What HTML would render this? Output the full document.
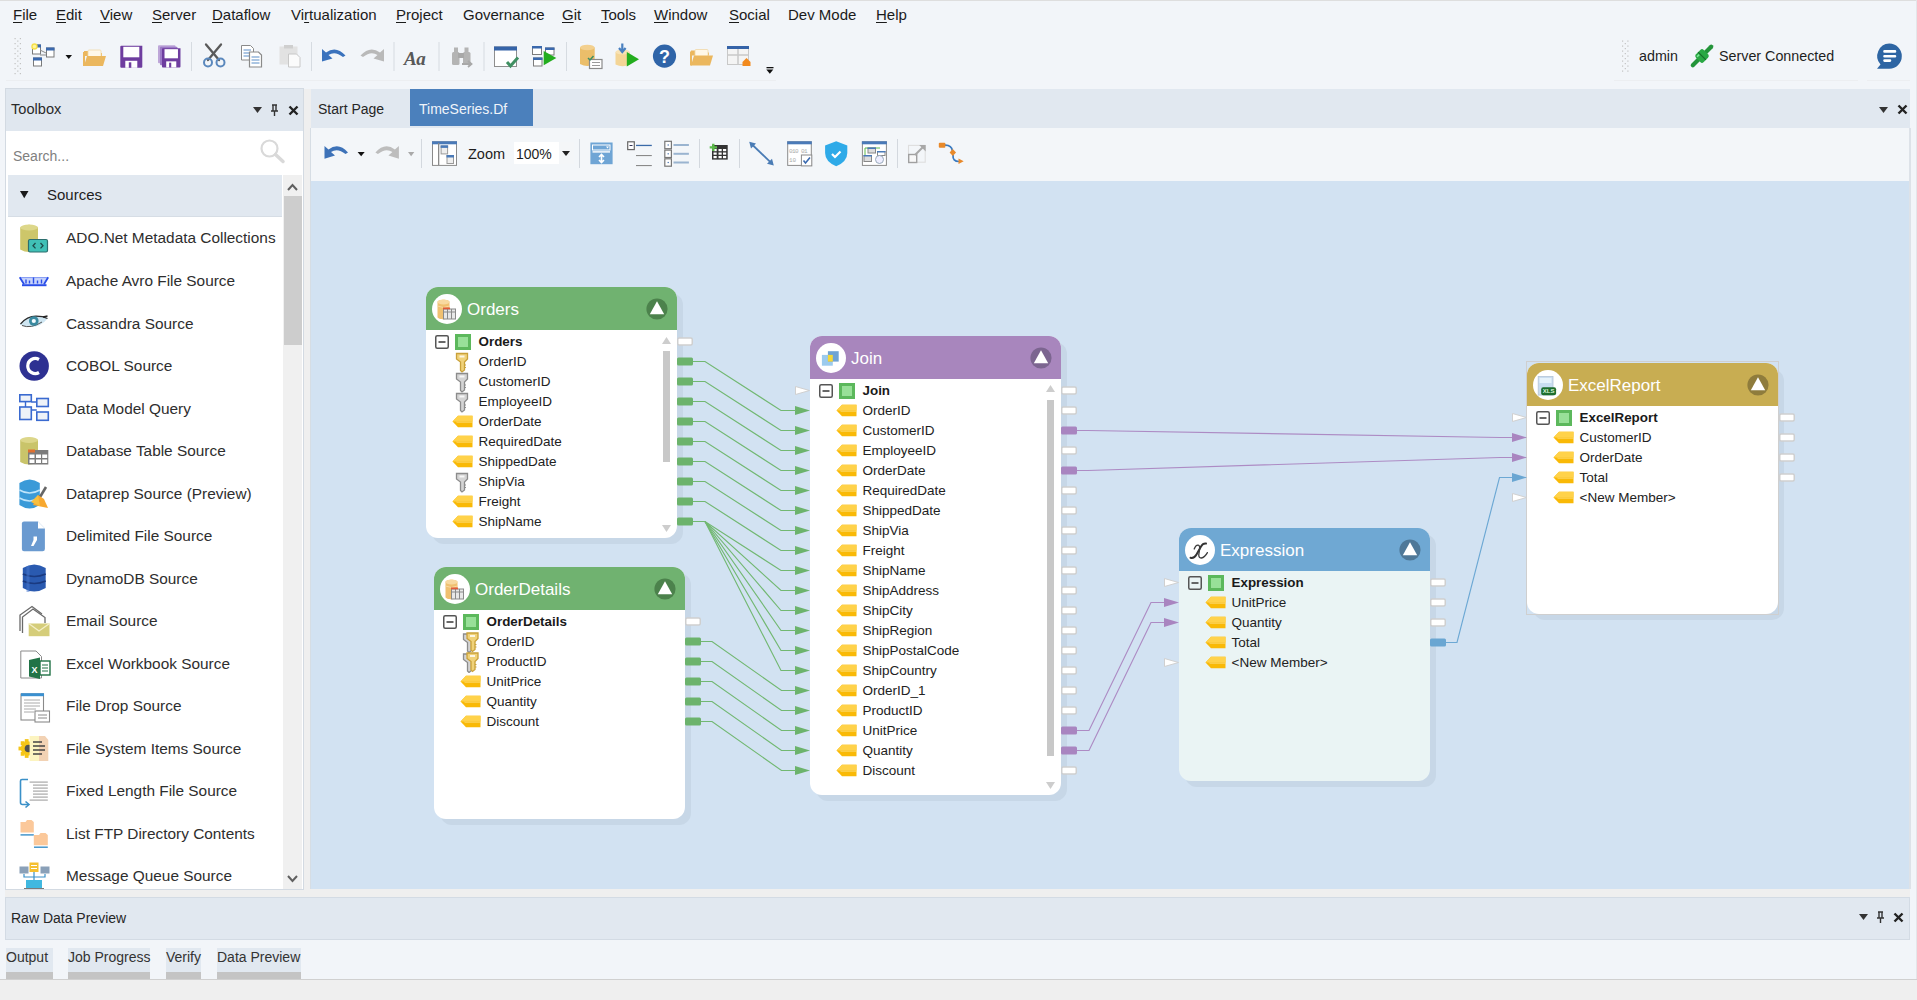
<!DOCTYPE html><html><head><meta charset="utf-8"><style>
*{margin:0;padding:0;box-sizing:border-box}
html,body{width:1917px;height:1000px;overflow:hidden;background:#f2f5f9;font-family:"Liberation Sans",sans-serif}
.t{position:absolute;white-space:pre}
.r{position:absolute}
u{text-decoration:none;border-bottom:1px solid currentColor}
</style></head><body><div class="r" style="left:0px;top:0px;width:1917px;height:1px;background:#dedede;"></div><div class="t" style="left:13px;top:7.30px;font-size:15px;line-height:15px;color:#1b1b1b;font-weight:400;"><span style="text-decoration:underline;text-underline-offset:2px">F</span>ile</div><div class="t" style="left:56px;top:7.30px;font-size:15px;line-height:15px;color:#1b1b1b;font-weight:400;"><span style="text-decoration:underline;text-underline-offset:2px">E</span>dit</div><div class="t" style="left:100px;top:7.30px;font-size:15px;line-height:15px;color:#1b1b1b;font-weight:400;"><span style="text-decoration:underline;text-underline-offset:2px">V</span>iew</div><div class="t" style="left:152px;top:7.30px;font-size:15px;line-height:15px;color:#1b1b1b;font-weight:400;"><span style="text-decoration:underline;text-underline-offset:2px">S</span>erver</div><div class="t" style="left:212px;top:7.30px;font-size:15px;line-height:15px;color:#1b1b1b;font-weight:400;"><span style="text-decoration:underline;text-underline-offset:2px">D</span>ataflow</div><div class="t" style="left:291px;top:7.30px;font-size:15px;line-height:15px;color:#1b1b1b;font-weight:400;">Vi<span style="text-decoration:underline;text-underline-offset:2px">r</span>tualization</div><div class="t" style="left:396px;top:7.30px;font-size:15px;line-height:15px;color:#1b1b1b;font-weight:400;"><span style="text-decoration:underline;text-underline-offset:2px">P</span>roject</div><div class="t" style="left:463px;top:7.30px;font-size:15px;line-height:15px;color:#1b1b1b;font-weight:400;">Governance</div><div class="t" style="left:562px;top:7.30px;font-size:15px;line-height:15px;color:#1b1b1b;font-weight:400;"><span style="text-decoration:underline;text-underline-offset:2px">G</span>it</div><div class="t" style="left:601px;top:7.30px;font-size:15px;line-height:15px;color:#1b1b1b;font-weight:400;"><span style="text-decoration:underline;text-underline-offset:2px">T</span>ools</div><div class="t" style="left:654px;top:7.30px;font-size:15px;line-height:15px;color:#1b1b1b;font-weight:400;"><span style="text-decoration:underline;text-underline-offset:2px">W</span>indow</div><div class="t" style="left:729px;top:7.30px;font-size:15px;line-height:15px;color:#1b1b1b;font-weight:400;"><span style="text-decoration:underline;text-underline-offset:2px">S</span>ocial</div><div class="t" style="left:788px;top:7.30px;font-size:15px;line-height:15px;color:#1b1b1b;font-weight:400;">Dev Mode</div><div class="t" style="left:876px;top:7.30px;font-size:15px;line-height:15px;color:#1b1b1b;font-weight:400;"><span style="text-decoration:underline;text-underline-offset:2px">H</span>elp</div><div class="r" style="left:6px;top:80px;width:770px;height:1px;background:#eceef1;"></div><div class="r" style="left:1614px;top:80px;width:244px;height:1px;background:#eceef1;"></div><div class="r" style="left:1867px;top:80px;width:43px;height:1px;background:#eceef1;"></div><div class="r" style="left:1916px;top:0px;width:1px;height:980px;background:#e4e6e9;"></div><div class="r" style="left:5px;top:89px;width:1905px;height:808px;background:#efefef;"></div><div class="r" style="left:5px;top:88px;width:299px;height:802px;background:#d3dae2;"></div><div class="r" style="left:6px;top:89px;width:297px;height:42px;background:#e0e7ef;"></div><div class="t" style="left:11px;top:102.44px;font-size:14.6px;line-height:14.6px;color:#2a2a2a;font-weight:400;">Toolbox</div><div class="r" style="left:6px;top:131px;width:297px;height:44px;background:#ffffff;"></div><div class="t" style="left:13px;top:149.15px;font-size:14px;line-height:14px;color:#808080;font-weight:400;">Search...</div><svg class="r" style="left:253px;top:107px;" width="9" height="6" viewBox="0 0 9 6"><path d="M0 0H9L4.5 6Z" fill="#333"/></svg><svg class="r" style="left:270px;top:104px;" width="9" height="12" viewBox="0 0 9 12"><path d="M2 1H7M3 1V7M6 1V7M1 7H8M4.5 7V12" stroke="#333" stroke-width="1.4" fill="none"/></svg><svg class="r" style="left:287.5px;top:104.5px;" width="11" height="11" viewBox="0 0 11 11"><path d="M1.5 1.5L9.5 9.5M9.5 1.5L1.5 9.5" stroke="#222" stroke-width="2.4"/></svg><svg class="r" style="left:259px;top:139px;" width="28" height="25" viewBox="0 0 28 25"><circle cx="10.5" cy="9.5" r="8" fill="none" stroke="#d9d9d9" stroke-width="2.2"/><path d="M16.5 15.5L24 22.5" stroke="#d9d9d9" stroke-width="3.5" stroke-linecap="round"/></svg><div class="r" style="left:6px;top:175px;width:297px;height:714px;background:#ffffff;"></div><div class="r" style="left:8px;top:175px;width:274px;height:42px;background:#e1e8f0;"></div><div class="r" style="left:8px;top:216px;width:274px;height:1px;background:#d6dde5;"></div><div class="t" style="left:47px;top:187.30px;font-size:15px;line-height:15px;color:#1e1e1e;font-weight:400;">Sources</div><svg class="r" style="left:19.5px;top:190.5px;" width="9" height="8" viewBox="0 0 9 8"><path d="M0 0H8.5L4.25 7.2Z" fill="#1a1a1a"/></svg><div class="r" style="left:283px;top:175px;width:19px;height:714px;background:#f0f0f0;"></div><div class="r" style="left:284px;top:196px;width:18px;height:149px;background:#cdcdcd;"></div><svg class="r" style="left:287px;top:183px;" width="11" height="8" viewBox="0 0 11 8"><path d="M1 7L5.5 2L10 7" stroke="#606060" stroke-width="2" fill="none"/></svg><svg class="r" style="left:287px;top:875px;" width="11" height="8" viewBox="0 0 11 8"><path d="M1 1L5.5 6L10 1" stroke="#606060" stroke-width="2" fill="none"/></svg><div class="t" style="left:66px;top:230.46px;font-size:15.4px;line-height:15.4px;color:#2e2e2e;font-weight:400;">ADO.Net Metadata Collections</div><div class="t" style="left:66px;top:272.99px;font-size:15.4px;line-height:15.4px;color:#2e2e2e;font-weight:400;">Apache Avro File Source</div><div class="t" style="left:66px;top:315.52px;font-size:15.4px;line-height:15.4px;color:#2e2e2e;font-weight:400;">Cassandra Source</div><div class="t" style="left:66px;top:358.05px;font-size:15.4px;line-height:15.4px;color:#2e2e2e;font-weight:400;">COBOL Source</div><div class="t" style="left:66px;top:400.58px;font-size:15.4px;line-height:15.4px;color:#2e2e2e;font-weight:400;">Data Model Query</div><div class="t" style="left:66px;top:443.11px;font-size:15.4px;line-height:15.4px;color:#2e2e2e;font-weight:400;">Database Table Source</div><div class="t" style="left:66px;top:485.64px;font-size:15.4px;line-height:15.4px;color:#2e2e2e;font-weight:400;">Dataprep Source (Preview)</div><div class="t" style="left:66px;top:528.17px;font-size:15.4px;line-height:15.4px;color:#2e2e2e;font-weight:400;">Delimited File Source</div><div class="t" style="left:66px;top:570.70px;font-size:15.4px;line-height:15.4px;color:#2e2e2e;font-weight:400;">DynamoDB Source</div><div class="t" style="left:66px;top:613.23px;font-size:15.4px;line-height:15.4px;color:#2e2e2e;font-weight:400;">Email Source</div><div class="t" style="left:66px;top:655.76px;font-size:15.4px;line-height:15.4px;color:#2e2e2e;font-weight:400;">Excel Workbook Source</div><div class="t" style="left:66px;top:698.29px;font-size:15.4px;line-height:15.4px;color:#2e2e2e;font-weight:400;">File Drop Source</div><div class="t" style="left:66px;top:740.82px;font-size:15.4px;line-height:15.4px;color:#2e2e2e;font-weight:400;">File System Items Source</div><div class="t" style="left:66px;top:783.35px;font-size:15.4px;line-height:15.4px;color:#2e2e2e;font-weight:400;">Fixed Length File Source</div><div class="t" style="left:66px;top:825.88px;font-size:15.4px;line-height:15.4px;color:#2e2e2e;font-weight:400;">List FTP Directory Contents</div><div class="t" style="left:66px;top:868.41px;font-size:15.4px;line-height:15.4px;color:#2e2e2e;font-weight:400;">Message Queue Source</div><div class="r" style="left:310px;top:128px;width:1px;height:761px;background:#d6dde4;"></div><div class="r" style="left:311px;top:89px;width:1599px;height:39px;background:#e1e8f0;"></div><div class="t" style="left:318px;top:101.65px;font-size:14px;line-height:14px;color:#262626;font-weight:400;">Start Page</div><div class="r" style="left:410px;top:89px;width:123px;height:37px;background:#4b80bc;"></div><div class="t" style="left:419px;top:101.65px;font-size:14px;line-height:14px;color:#f0f4fa;font-weight:400;">TimeSeries.Df</div><svg class="r" style="left:1879px;top:107px;" width="9" height="6" viewBox="0 0 9 6"><path d="M0 0H9L4.5 6Z" fill="#333"/></svg><svg class="r" style="left:1897px;top:104px;" width="11" height="11" viewBox="0 0 11 11"><path d="M1.5 1.5L9.5 9.5M9.5 1.5L1.5 9.5" stroke="#222" stroke-width="2.4"/></svg><div class="r" style="left:311px;top:128px;width:1599px;height:53px;background:#f3f6f9;"></div><div class="r" style="left:311px;top:181px;width:1599px;height:708px;background:#d2e2f2;"></div><div class="r" style="left:1909px;top:128px;width:2px;height:761px;background:#dde2e8;"></div><div class="t" style="left:468px;top:146.73px;font-size:14.5px;line-height:14.5px;color:#1e1e1e;font-weight:400;">Zoom</div><div class="r" style="left:514px;top:142px;width:60px;height:22px;background:#ffffff;"></div><div class="r" style="left:559px;top:142px;width:15px;height:22px;background:#f4f6f8;"></div><div class="t" style="left:516px;top:147.15px;font-size:14px;line-height:14px;color:#1e1e1e;font-weight:400;">100%</div><svg class="r" style="left:562px;top:151px;" width="8" height="5" viewBox="0 0 8 5"><path d="M0 0H8L4 5Z" fill="#222"/></svg><div class="r" style="left:421px;top:139px;width:1px;height:29px;background:#d3d8de;"></div><div class="r" style="left:579px;top:139px;width:1px;height:29px;background:#d3d8de;"></div><div class="r" style="left:699px;top:139px;width:1px;height:29px;background:#d3d8de;"></div><div class="r" style="left:739px;top:139px;width:1px;height:29px;background:#d3d8de;"></div><div class="r" style="left:897px;top:139px;width:1px;height:29px;background:#d3d8de;"></div><div class="r" style="left:5px;top:897px;width:1905px;height:43px;background:#d3dbe4;"></div><div class="r" style="left:6px;top:898px;width:1903px;height:41px;background:#e1e8f0;"></div><div class="t" style="left:11px;top:910.65px;font-size:14px;line-height:14px;color:#262626;font-weight:400;">Raw Data Preview</div><svg class="r" style="left:1859px;top:914px;" width="9" height="6" viewBox="0 0 9 6"><path d="M0 0H9L4.5 6Z" fill="#333"/></svg><svg class="r" style="left:1876px;top:911px;" width="9" height="12" viewBox="0 0 9 12"><path d="M2 1H7M3 1V7M6 1V7M1 7H8M4.5 7V12" stroke="#333" stroke-width="1.4" fill="none"/></svg><svg class="r" style="left:1893px;top:912px;" width="11" height="11" viewBox="0 0 11 11"><path d="M1.5 1.5L9.5 9.5M9.5 1.5L1.5 9.5" stroke="#222" stroke-width="2.4"/></svg><div class="r" style="left:6px;top:948px;width:47px;height:24px;background:#e1e8f0;"></div><div class="r" style="left:6px;top:972px;width:47px;height:7px;background:#c4c4c4;"></div><div class="t" style="left:6px;top:950.15px;font-size:14px;line-height:14px;color:#333333;font-weight:400;">Output</div><div class="r" style="left:68px;top:948px;width:82px;height:24px;background:#e1e8f0;"></div><div class="r" style="left:68px;top:972px;width:82px;height:7px;background:#c4c4c4;"></div><div class="t" style="left:68px;top:950.15px;font-size:14px;line-height:14px;color:#333333;font-weight:400;">Job Progress</div><div class="r" style="left:166px;top:948px;width:35px;height:24px;background:#e1e8f0;"></div><div class="r" style="left:166px;top:972px;width:35px;height:7px;background:#c4c4c4;"></div><div class="t" style="left:166px;top:950.15px;font-size:14px;line-height:14px;color:#333333;font-weight:400;">Verify</div><div class="r" style="left:217px;top:948px;width:84px;height:24px;background:#e1e8f0;"></div><div class="r" style="left:217px;top:972px;width:84px;height:7px;background:#c4c4c4;"></div><div class="t" style="left:217px;top:950.15px;font-size:14px;line-height:14px;color:#333333;font-weight:400;">Data Preview</div><div class="r" style="left:0px;top:979px;width:1917px;height:1px;background:#d0d0d0;"></div><div class="r" style="left:0px;top:980px;width:1917px;height:20px;background:#efefef;"></div><div class="t" style="left:1639px;top:49.40px;font-size:14.3px;line-height:14.3px;color:#1e1e1e;font-weight:400;">admin</div><div class="t" style="left:1719px;top:49.40px;font-size:14.3px;line-height:14.3px;color:#1e1e1e;font-weight:400;">Server Connected</div><div class="r" style="left:432px;top:293px;width:251px;height:251px;border-radius:12px;background:#c7d7e7"></div><div class="r" style="left:426px;top:287px;width:251px;height:251px;border-radius:12px;background:#ffffff;overflow:hidden"><div class="r" style="left:0;top:0;width:251px;height:43px;background:#70b270"></div></div><svg class="r" style="left:432px;top:293.8px" width="30" height="30" viewBox="0 0 30 30"><circle cx="15" cy="15" r="15" fill="#fff"/><path d="M5.5 8C5.5 5 17.5 5 17.5 8V23C17.5 26 5.5 26 5.5 23Z" fill="#f0c070"/><ellipse cx="11.5" cy="8" rx="6" ry="2.6" fill="#f8d9a0"/><path d="M5.5 12Q11.5 15 17.5 12" stroke="#f8d9a0" stroke-width="1" fill="none"/><rect x="11.5" y="15" width="12" height="10" fill="#e8e8e8" stroke="#8a8a8a" stroke-width="1"/><path d="M11.5 18H23.5M15.5 15V25M19.5 15V25" stroke="#8a8a8a" stroke-width="1"/><rect x="11" y="13.5" width="7" height="1.8" fill="#e05a3a"/></svg><div class="t" style="left:467px;top:300.61px;font-size:17px;line-height:17px;color:#fff">Orders</div><svg class="r" style="left:645.8px;top:297.8px" width="22" height="22" viewBox="0 0 22 22"><circle cx="11" cy="11" r="10.6" fill="#4c824c"/><path d="M3.8 16.2L11 3.2L18.2 16.2Z" fill="#fff"/></svg><svg class="r" style="left:435px;top:335.0px" width="14" height="14" viewBox="0 0 14 14"><rect x="0.75" y="0.75" width="12.5" height="12.5" rx="1.5" fill="none" stroke="#555" stroke-width="1.5"/><rect x="3.5" y="6.2" width="7" height="1.6" fill="#444"/></svg><svg class="r" style="left:455px;top:333.5px" width="16" height="16" viewBox="0 0 16 16"><rect x="1.5" y="1.5" width="13" height="13" fill="#98e098" stroke="#5cb85c" stroke-width="3"/></svg><div class="t" style="left:478.5px;top:335.16px;font-size:13.4px;line-height:13.4px;color:#1a1a1a;font-weight:700">Orders</div><svg class="r" style="left:455px;top:351.5px" width="17" height="21" viewBox="0 0 17 21"><path d="M1.5 1.5H12.5V7L9.5 10V18L7 20L5.5 18.5V10L1.5 7Z" fill="#f0d27a" stroke="#c9a13a" stroke-width="1.3"/><rect x="4.5" y="3.5" width="5" height="2" fill="#fff" opacity=".8"/><path d="M9.5 13H11M9.5 15.5H11" stroke="#c9a13a" stroke-width="1"/></svg><div class="t" style="left:478.5px;top:355.07px;font-size:13.5px;line-height:13.5px;color:#222">OrderID</div><svg class="r" style="left:455px;top:371.5px" width="17" height="21" viewBox="0 0 17 21"><path d="M1.5 1.5H12.5V7L9.5 10V18L7 20L5.5 18.5V10L1.5 7Z" fill="#d4d4d4" stroke="#8c8c8c" stroke-width="1.3"/><rect x="4.5" y="3.5" width="5" height="2" fill="#fff" opacity=".8"/><path d="M9.5 13H11M9.5 15.5H11" stroke="#8c8c8c" stroke-width="1"/></svg><div class="t" style="left:478.5px;top:375.07px;font-size:13.5px;line-height:13.5px;color:#222">CustomerID</div><svg class="r" style="left:455px;top:391.5px" width="17" height="21" viewBox="0 0 17 21"><path d="M1.5 1.5H12.5V7L9.5 10V18L7 20L5.5 18.5V10L1.5 7Z" fill="#d4d4d4" stroke="#8c8c8c" stroke-width="1.3"/><rect x="4.5" y="3.5" width="5" height="2" fill="#fff" opacity=".8"/><path d="M9.5 13H11M9.5 15.5H11" stroke="#8c8c8c" stroke-width="1"/></svg><div class="t" style="left:478.5px;top:395.07px;font-size:13.5px;line-height:13.5px;color:#222">EmployeeID</div><svg class="r" style="left:452px;top:415.0px" width="21" height="13" viewBox="0 0 21 13"><path d="M0.5 6.5L6 0.8H20.5V12.2H6Z" fill="#f9b906"/><path d="M0.5 6.5L6 0.8H20.5V6.5Z" fill="#ffd24a"/><path d="M3.5 6.5H20.5V8H5Z" fill="#fde38a" opacity=".5"/></svg><div class="t" style="left:478.5px;top:415.07px;font-size:13.5px;line-height:13.5px;color:#222">OrderDate</div><svg class="r" style="left:452px;top:435.0px" width="21" height="13" viewBox="0 0 21 13"><path d="M0.5 6.5L6 0.8H20.5V12.2H6Z" fill="#f9b906"/><path d="M0.5 6.5L6 0.8H20.5V6.5Z" fill="#ffd24a"/><path d="M3.5 6.5H20.5V8H5Z" fill="#fde38a" opacity=".5"/></svg><div class="t" style="left:478.5px;top:435.07px;font-size:13.5px;line-height:13.5px;color:#222">RequiredDate</div><svg class="r" style="left:452px;top:455.0px" width="21" height="13" viewBox="0 0 21 13"><path d="M0.5 6.5L6 0.8H20.5V12.2H6Z" fill="#f9b906"/><path d="M0.5 6.5L6 0.8H20.5V6.5Z" fill="#ffd24a"/><path d="M3.5 6.5H20.5V8H5Z" fill="#fde38a" opacity=".5"/></svg><div class="t" style="left:478.5px;top:455.07px;font-size:13.5px;line-height:13.5px;color:#222">ShippedDate</div><svg class="r" style="left:455px;top:471.5px" width="17" height="21" viewBox="0 0 17 21"><path d="M1.5 1.5H12.5V7L9.5 10V18L7 20L5.5 18.5V10L1.5 7Z" fill="#d4d4d4" stroke="#8c8c8c" stroke-width="1.3"/><rect x="4.5" y="3.5" width="5" height="2" fill="#fff" opacity=".8"/><path d="M9.5 13H11M9.5 15.5H11" stroke="#8c8c8c" stroke-width="1"/></svg><div class="t" style="left:478.5px;top:475.07px;font-size:13.5px;line-height:13.5px;color:#222">ShipVia</div><svg class="r" style="left:452px;top:495.0px" width="21" height="13" viewBox="0 0 21 13"><path d="M0.5 6.5L6 0.8H20.5V12.2H6Z" fill="#f9b906"/><path d="M0.5 6.5L6 0.8H20.5V6.5Z" fill="#ffd24a"/><path d="M3.5 6.5H20.5V8H5Z" fill="#fde38a" opacity=".5"/></svg><div class="t" style="left:478.5px;top:495.07px;font-size:13.5px;line-height:13.5px;color:#222">Freight</div><svg class="r" style="left:452px;top:515.0px" width="21" height="13" viewBox="0 0 21 13"><path d="M0.5 6.5L6 0.8H20.5V12.2H6Z" fill="#f9b906"/><path d="M0.5 6.5L6 0.8H20.5V6.5Z" fill="#ffd24a"/><path d="M3.5 6.5H20.5V8H5Z" fill="#fde38a" opacity=".5"/></svg><div class="t" style="left:478.5px;top:515.07px;font-size:13.5px;line-height:13.5px;color:#222">ShipName</div><svg class="r" style="left:662px;top:337px" width="9" height="7" viewBox="0 0 9 7"><path d="M0 7L4.5 0L9 7Z" fill="#cdcdcd"/></svg><div class="r" style="left:663px;top:351px;width:7px;height:111px;background:#c8c8c8"></div><svg class="r" style="left:662px;top:525px" width="9" height="7" viewBox="0 0 9 7"><path d="M0 0L4.5 7L9 0Z" fill="#cdcdcd"/></svg><div class="r" style="left:440px;top:573px;width:251px;height:252px;border-radius:12px;background:#c7d7e7"></div><div class="r" style="left:434px;top:567px;width:251px;height:252px;border-radius:12px;background:#ffffff;overflow:hidden"><div class="r" style="left:0;top:0;width:251px;height:43px;background:#70b270"></div></div><svg class="r" style="left:440px;top:573.8px" width="30" height="30" viewBox="0 0 30 30"><circle cx="15" cy="15" r="15" fill="#fff"/><path d="M5.5 8C5.5 5 17.5 5 17.5 8V23C17.5 26 5.5 26 5.5 23Z" fill="#f0c070"/><ellipse cx="11.5" cy="8" rx="6" ry="2.6" fill="#f8d9a0"/><path d="M5.5 12Q11.5 15 17.5 12" stroke="#f8d9a0" stroke-width="1" fill="none"/><rect x="11.5" y="15" width="12" height="10" fill="#e8e8e8" stroke="#8a8a8a" stroke-width="1"/><path d="M11.5 18H23.5M15.5 15V25M19.5 15V25" stroke="#8a8a8a" stroke-width="1"/><rect x="11" y="13.5" width="7" height="1.8" fill="#e05a3a"/></svg><div class="t" style="left:475px;top:580.61px;font-size:17px;line-height:17px;color:#fff">OrderDetails</div><svg class="r" style="left:653.8px;top:577.8px" width="22" height="22" viewBox="0 0 22 22"><circle cx="11" cy="11" r="10.6" fill="#4c824c"/><path d="M3.8 16.2L11 3.2L18.2 16.2Z" fill="#fff"/></svg><svg class="r" style="left:443px;top:615.0px" width="14" height="14" viewBox="0 0 14 14"><rect x="0.75" y="0.75" width="12.5" height="12.5" rx="1.5" fill="none" stroke="#555" stroke-width="1.5"/><rect x="3.5" y="6.2" width="7" height="1.6" fill="#444"/></svg><svg class="r" style="left:463px;top:613.5px" width="16" height="16" viewBox="0 0 16 16"><rect x="1.5" y="1.5" width="13" height="13" fill="#98e098" stroke="#5cb85c" stroke-width="3"/></svg><div class="t" style="left:486.5px;top:615.16px;font-size:13.4px;line-height:13.4px;color:#1a1a1a;font-weight:700">OrderDetails</div><svg class="r" style="left:462px;top:631.5px" width="17" height="21" viewBox="0 0 17 21"><path d="M1.5 2.0H12.5V7.5L9.5 10.5V18.5L7 20.5L5.5 19.0V10.5L1.5 7.5Z" fill="#d4d4d4" stroke="#8c8c8c" stroke-width="1.3"/><rect x="4.5" y="4.0" width="5" height="2" fill="#fff" opacity=".8"/><path d="M9.5 13.5H11M9.5 16.0H11" stroke="#8c8c8c" stroke-width="1"/><path d="M5.0 1.0H16.0V6.5L13.0 9.5V17.5L10.5 19.5L9.0 18.0V9.5L5.0 6.5Z" fill="#f0d27a" stroke="#c9a13a" stroke-width="1.3"/><rect x="8.0" y="3.0" width="5" height="2" fill="#fff" opacity=".8"/><path d="M13.0 12.5H14.5M13.0 15.0H14.5" stroke="#c9a13a" stroke-width="1"/></svg><div class="t" style="left:486.5px;top:635.07px;font-size:13.5px;line-height:13.5px;color:#222">OrderID</div><svg class="r" style="left:462px;top:651.5px" width="17" height="21" viewBox="0 0 17 21"><path d="M1.5 2.0H12.5V7.5L9.5 10.5V18.5L7 20.5L5.5 19.0V10.5L1.5 7.5Z" fill="#d4d4d4" stroke="#8c8c8c" stroke-width="1.3"/><rect x="4.5" y="4.0" width="5" height="2" fill="#fff" opacity=".8"/><path d="M9.5 13.5H11M9.5 16.0H11" stroke="#8c8c8c" stroke-width="1"/><path d="M5.0 1.0H16.0V6.5L13.0 9.5V17.5L10.5 19.5L9.0 18.0V9.5L5.0 6.5Z" fill="#f0d27a" stroke="#c9a13a" stroke-width="1.3"/><rect x="8.0" y="3.0" width="5" height="2" fill="#fff" opacity=".8"/><path d="M13.0 12.5H14.5M13.0 15.0H14.5" stroke="#c9a13a" stroke-width="1"/></svg><div class="t" style="left:486.5px;top:655.07px;font-size:13.5px;line-height:13.5px;color:#222">ProductID</div><svg class="r" style="left:460px;top:675.0px" width="21" height="13" viewBox="0 0 21 13"><path d="M0.5 6.5L6 0.8H20.5V12.2H6Z" fill="#f9b906"/><path d="M0.5 6.5L6 0.8H20.5V6.5Z" fill="#ffd24a"/><path d="M3.5 6.5H20.5V8H5Z" fill="#fde38a" opacity=".5"/></svg><div class="t" style="left:486.5px;top:675.07px;font-size:13.5px;line-height:13.5px;color:#222">UnitPrice</div><svg class="r" style="left:460px;top:695.0px" width="21" height="13" viewBox="0 0 21 13"><path d="M0.5 6.5L6 0.8H20.5V12.2H6Z" fill="#f9b906"/><path d="M0.5 6.5L6 0.8H20.5V6.5Z" fill="#ffd24a"/><path d="M3.5 6.5H20.5V8H5Z" fill="#fde38a" opacity=".5"/></svg><div class="t" style="left:486.5px;top:695.07px;font-size:13.5px;line-height:13.5px;color:#222">Quantity</div><svg class="r" style="left:460px;top:715.0px" width="21" height="13" viewBox="0 0 21 13"><path d="M0.5 6.5L6 0.8H20.5V12.2H6Z" fill="#f9b906"/><path d="M0.5 6.5L6 0.8H20.5V6.5Z" fill="#ffd24a"/><path d="M3.5 6.5H20.5V8H5Z" fill="#fde38a" opacity=".5"/></svg><div class="t" style="left:486.5px;top:715.07px;font-size:13.5px;line-height:13.5px;color:#222">Discount</div><div class="r" style="left:816px;top:342px;width:251px;height:459px;border-radius:12px;background:#c7d7e7"></div><div class="r" style="left:810px;top:336px;width:251px;height:459px;border-radius:12px;background:#ffffff;overflow:hidden"><div class="r" style="left:0;top:0;width:251px;height:43px;background:#a886bd"></div></div><svg class="r" style="left:816px;top:342.8px" width="30" height="30" viewBox="0 0 30 30"><circle cx="15" cy="15" r="15" fill="#fff"/><rect x="5.9" y="11.9" width="10.9" height="10.8" fill="#9ccbee"/><rect x="11.9" y="8.2" width="10.8" height="10.4" fill="#6fa3d4"/><rect x="11.9" y="11.9" width="4.9" height="6.7" fill="#f5d838"/></svg><div class="t" style="left:851px;top:349.61px;font-size:17px;line-height:17px;color:#fff">Join</div><svg class="r" style="left:1029.8px;top:346.8px" width="22" height="22" viewBox="0 0 22 22"><circle cx="11" cy="11" r="10.6" fill="#7c6590"/><path d="M3.8 16.2L11 3.2L18.2 16.2Z" fill="#fff"/></svg><svg class="r" style="left:819px;top:384.0px" width="14" height="14" viewBox="0 0 14 14"><rect x="0.75" y="0.75" width="12.5" height="12.5" rx="1.5" fill="none" stroke="#555" stroke-width="1.5"/><rect x="3.5" y="6.2" width="7" height="1.6" fill="#444"/></svg><svg class="r" style="left:839px;top:382.5px" width="16" height="16" viewBox="0 0 16 16"><rect x="1.5" y="1.5" width="13" height="13" fill="#98e098" stroke="#5cb85c" stroke-width="3"/></svg><div class="t" style="left:862.5px;top:384.16px;font-size:13.4px;line-height:13.4px;color:#1a1a1a;font-weight:700">Join</div><svg class="r" style="left:836px;top:404.0px" width="21" height="13" viewBox="0 0 21 13"><path d="M0.5 6.5L6 0.8H20.5V12.2H6Z" fill="#f9b906"/><path d="M0.5 6.5L6 0.8H20.5V6.5Z" fill="#ffd24a"/><path d="M3.5 6.5H20.5V8H5Z" fill="#fde38a" opacity=".5"/></svg><div class="t" style="left:862.5px;top:404.07px;font-size:13.5px;line-height:13.5px;color:#222">OrderID</div><svg class="r" style="left:836px;top:424.0px" width="21" height="13" viewBox="0 0 21 13"><path d="M0.5 6.5L6 0.8H20.5V12.2H6Z" fill="#f9b906"/><path d="M0.5 6.5L6 0.8H20.5V6.5Z" fill="#ffd24a"/><path d="M3.5 6.5H20.5V8H5Z" fill="#fde38a" opacity=".5"/></svg><div class="t" style="left:862.5px;top:424.07px;font-size:13.5px;line-height:13.5px;color:#222">CustomerID</div><svg class="r" style="left:836px;top:444.0px" width="21" height="13" viewBox="0 0 21 13"><path d="M0.5 6.5L6 0.8H20.5V12.2H6Z" fill="#f9b906"/><path d="M0.5 6.5L6 0.8H20.5V6.5Z" fill="#ffd24a"/><path d="M3.5 6.5H20.5V8H5Z" fill="#fde38a" opacity=".5"/></svg><div class="t" style="left:862.5px;top:444.07px;font-size:13.5px;line-height:13.5px;color:#222">EmployeeID</div><svg class="r" style="left:836px;top:464.0px" width="21" height="13" viewBox="0 0 21 13"><path d="M0.5 6.5L6 0.8H20.5V12.2H6Z" fill="#f9b906"/><path d="M0.5 6.5L6 0.8H20.5V6.5Z" fill="#ffd24a"/><path d="M3.5 6.5H20.5V8H5Z" fill="#fde38a" opacity=".5"/></svg><div class="t" style="left:862.5px;top:464.07px;font-size:13.5px;line-height:13.5px;color:#222">OrderDate</div><svg class="r" style="left:836px;top:484.0px" width="21" height="13" viewBox="0 0 21 13"><path d="M0.5 6.5L6 0.8H20.5V12.2H6Z" fill="#f9b906"/><path d="M0.5 6.5L6 0.8H20.5V6.5Z" fill="#ffd24a"/><path d="M3.5 6.5H20.5V8H5Z" fill="#fde38a" opacity=".5"/></svg><div class="t" style="left:862.5px;top:484.07px;font-size:13.5px;line-height:13.5px;color:#222">RequiredDate</div><svg class="r" style="left:836px;top:504.0px" width="21" height="13" viewBox="0 0 21 13"><path d="M0.5 6.5L6 0.8H20.5V12.2H6Z" fill="#f9b906"/><path d="M0.5 6.5L6 0.8H20.5V6.5Z" fill="#ffd24a"/><path d="M3.5 6.5H20.5V8H5Z" fill="#fde38a" opacity=".5"/></svg><div class="t" style="left:862.5px;top:504.07px;font-size:13.5px;line-height:13.5px;color:#222">ShippedDate</div><svg class="r" style="left:836px;top:524.0px" width="21" height="13" viewBox="0 0 21 13"><path d="M0.5 6.5L6 0.8H20.5V12.2H6Z" fill="#f9b906"/><path d="M0.5 6.5L6 0.8H20.5V6.5Z" fill="#ffd24a"/><path d="M3.5 6.5H20.5V8H5Z" fill="#fde38a" opacity=".5"/></svg><div class="t" style="left:862.5px;top:524.07px;font-size:13.5px;line-height:13.5px;color:#222">ShipVia</div><svg class="r" style="left:836px;top:544.0px" width="21" height="13" viewBox="0 0 21 13"><path d="M0.5 6.5L6 0.8H20.5V12.2H6Z" fill="#f9b906"/><path d="M0.5 6.5L6 0.8H20.5V6.5Z" fill="#ffd24a"/><path d="M3.5 6.5H20.5V8H5Z" fill="#fde38a" opacity=".5"/></svg><div class="t" style="left:862.5px;top:544.07px;font-size:13.5px;line-height:13.5px;color:#222">Freight</div><svg class="r" style="left:836px;top:564.0px" width="21" height="13" viewBox="0 0 21 13"><path d="M0.5 6.5L6 0.8H20.5V12.2H6Z" fill="#f9b906"/><path d="M0.5 6.5L6 0.8H20.5V6.5Z" fill="#ffd24a"/><path d="M3.5 6.5H20.5V8H5Z" fill="#fde38a" opacity=".5"/></svg><div class="t" style="left:862.5px;top:564.07px;font-size:13.5px;line-height:13.5px;color:#222">ShipName</div><svg class="r" style="left:836px;top:584.0px" width="21" height="13" viewBox="0 0 21 13"><path d="M0.5 6.5L6 0.8H20.5V12.2H6Z" fill="#f9b906"/><path d="M0.5 6.5L6 0.8H20.5V6.5Z" fill="#ffd24a"/><path d="M3.5 6.5H20.5V8H5Z" fill="#fde38a" opacity=".5"/></svg><div class="t" style="left:862.5px;top:584.07px;font-size:13.5px;line-height:13.5px;color:#222">ShipAddress</div><svg class="r" style="left:836px;top:604.0px" width="21" height="13" viewBox="0 0 21 13"><path d="M0.5 6.5L6 0.8H20.5V12.2H6Z" fill="#f9b906"/><path d="M0.5 6.5L6 0.8H20.5V6.5Z" fill="#ffd24a"/><path d="M3.5 6.5H20.5V8H5Z" fill="#fde38a" opacity=".5"/></svg><div class="t" style="left:862.5px;top:604.07px;font-size:13.5px;line-height:13.5px;color:#222">ShipCity</div><svg class="r" style="left:836px;top:624.0px" width="21" height="13" viewBox="0 0 21 13"><path d="M0.5 6.5L6 0.8H20.5V12.2H6Z" fill="#f9b906"/><path d="M0.5 6.5L6 0.8H20.5V6.5Z" fill="#ffd24a"/><path d="M3.5 6.5H20.5V8H5Z" fill="#fde38a" opacity=".5"/></svg><div class="t" style="left:862.5px;top:624.07px;font-size:13.5px;line-height:13.5px;color:#222">ShipRegion</div><svg class="r" style="left:836px;top:644.0px" width="21" height="13" viewBox="0 0 21 13"><path d="M0.5 6.5L6 0.8H20.5V12.2H6Z" fill="#f9b906"/><path d="M0.5 6.5L6 0.8H20.5V6.5Z" fill="#ffd24a"/><path d="M3.5 6.5H20.5V8H5Z" fill="#fde38a" opacity=".5"/></svg><div class="t" style="left:862.5px;top:644.07px;font-size:13.5px;line-height:13.5px;color:#222">ShipPostalCode</div><svg class="r" style="left:836px;top:664.0px" width="21" height="13" viewBox="0 0 21 13"><path d="M0.5 6.5L6 0.8H20.5V12.2H6Z" fill="#f9b906"/><path d="M0.5 6.5L6 0.8H20.5V6.5Z" fill="#ffd24a"/><path d="M3.5 6.5H20.5V8H5Z" fill="#fde38a" opacity=".5"/></svg><div class="t" style="left:862.5px;top:664.07px;font-size:13.5px;line-height:13.5px;color:#222">ShipCountry</div><svg class="r" style="left:836px;top:684.0px" width="21" height="13" viewBox="0 0 21 13"><path d="M0.5 6.5L6 0.8H20.5V12.2H6Z" fill="#f9b906"/><path d="M0.5 6.5L6 0.8H20.5V6.5Z" fill="#ffd24a"/><path d="M3.5 6.5H20.5V8H5Z" fill="#fde38a" opacity=".5"/></svg><div class="t" style="left:862.5px;top:684.07px;font-size:13.5px;line-height:13.5px;color:#222">OrderID_1</div><svg class="r" style="left:836px;top:704.0px" width="21" height="13" viewBox="0 0 21 13"><path d="M0.5 6.5L6 0.8H20.5V12.2H6Z" fill="#f9b906"/><path d="M0.5 6.5L6 0.8H20.5V6.5Z" fill="#ffd24a"/><path d="M3.5 6.5H20.5V8H5Z" fill="#fde38a" opacity=".5"/></svg><div class="t" style="left:862.5px;top:704.07px;font-size:13.5px;line-height:13.5px;color:#222">ProductID</div><svg class="r" style="left:836px;top:724.0px" width="21" height="13" viewBox="0 0 21 13"><path d="M0.5 6.5L6 0.8H20.5V12.2H6Z" fill="#f9b906"/><path d="M0.5 6.5L6 0.8H20.5V6.5Z" fill="#ffd24a"/><path d="M3.5 6.5H20.5V8H5Z" fill="#fde38a" opacity=".5"/></svg><div class="t" style="left:862.5px;top:724.07px;font-size:13.5px;line-height:13.5px;color:#222">UnitPrice</div><svg class="r" style="left:836px;top:744.0px" width="21" height="13" viewBox="0 0 21 13"><path d="M0.5 6.5L6 0.8H20.5V12.2H6Z" fill="#f9b906"/><path d="M0.5 6.5L6 0.8H20.5V6.5Z" fill="#ffd24a"/><path d="M3.5 6.5H20.5V8H5Z" fill="#fde38a" opacity=".5"/></svg><div class="t" style="left:862.5px;top:744.07px;font-size:13.5px;line-height:13.5px;color:#222">Quantity</div><svg class="r" style="left:836px;top:764.0px" width="21" height="13" viewBox="0 0 21 13"><path d="M0.5 6.5L6 0.8H20.5V12.2H6Z" fill="#f9b906"/><path d="M0.5 6.5L6 0.8H20.5V6.5Z" fill="#ffd24a"/><path d="M3.5 6.5H20.5V8H5Z" fill="#fde38a" opacity=".5"/></svg><div class="t" style="left:862.5px;top:764.07px;font-size:13.5px;line-height:13.5px;color:#222">Discount</div><svg class="r" style="left:1046px;top:385px" width="9" height="7" viewBox="0 0 9 7"><path d="M0 7L4.5 0L9 7Z" fill="#cdcdcd"/></svg><div class="r" style="left:1047px;top:400px;width:7px;height:356px;background:#c8c8c8"></div><svg class="r" style="left:1046px;top:782px" width="9" height="7" viewBox="0 0 9 7"><path d="M0 0L4.5 7L9 0Z" fill="#cdcdcd"/></svg><div class="r" style="left:1185px;top:534px;width:251px;height:253px;border-radius:12px;background:#c7d7e7"></div><div class="r" style="left:1179px;top:528px;width:251px;height:253px;border-radius:12px;background:#eaf4f4;overflow:hidden"><div class="r" style="left:0;top:0;width:251px;height:43px;background:#6fa8d3"></div></div><svg class="r" style="left:1185px;top:534.8px" width="30" height="30" viewBox="0 0 30 30"><circle cx="15" cy="15" r="15" fill="#fff"/><path d="M5.5 22.8Q9 23.8 11.5 19.5L16 11.5Q18 8.2 21 8.6" stroke="#333" stroke-width="2" fill="none" stroke-linecap="round"/><path d="M9.2 14Q10.8 9.8 13.2 10.2Q15 10.6 14.6 14.5L13.8 19.5Q13.6 23.2 16.4 23Q19.6 22.6 22.4 17.6" stroke="#3a3a3a" stroke-width="1.3" fill="none" stroke-linecap="round"/></svg><div class="t" style="left:1220px;top:541.61px;font-size:17px;line-height:17px;color:#fff">Expression</div><svg class="r" style="left:1398.8px;top:538.8px" width="22" height="22" viewBox="0 0 22 22"><circle cx="11" cy="11" r="10.6" fill="#4f7898"/><path d="M3.8 16.2L11 3.2L18.2 16.2Z" fill="#fff"/></svg><svg class="r" style="left:1188px;top:576.0px" width="14" height="14" viewBox="0 0 14 14"><rect x="0.75" y="0.75" width="12.5" height="12.5" rx="1.5" fill="none" stroke="#555" stroke-width="1.5"/><rect x="3.5" y="6.2" width="7" height="1.6" fill="#444"/></svg><svg class="r" style="left:1208px;top:574.5px" width="16" height="16" viewBox="0 0 16 16"><rect x="1.5" y="1.5" width="13" height="13" fill="#98e098" stroke="#5cb85c" stroke-width="3"/></svg><div class="t" style="left:1231.5px;top:576.16px;font-size:13.4px;line-height:13.4px;color:#1a1a1a;font-weight:700">Expression</div><svg class="r" style="left:1205px;top:596.0px" width="21" height="13" viewBox="0 0 21 13"><path d="M0.5 6.5L6 0.8H20.5V12.2H6Z" fill="#f9b906"/><path d="M0.5 6.5L6 0.8H20.5V6.5Z" fill="#ffd24a"/><path d="M3.5 6.5H20.5V8H5Z" fill="#fde38a" opacity=".5"/></svg><div class="t" style="left:1231.5px;top:596.07px;font-size:13.5px;line-height:13.5px;color:#222">UnitPrice</div><svg class="r" style="left:1205px;top:616.0px" width="21" height="13" viewBox="0 0 21 13"><path d="M0.5 6.5L6 0.8H20.5V12.2H6Z" fill="#f9b906"/><path d="M0.5 6.5L6 0.8H20.5V6.5Z" fill="#ffd24a"/><path d="M3.5 6.5H20.5V8H5Z" fill="#fde38a" opacity=".5"/></svg><div class="t" style="left:1231.5px;top:616.07px;font-size:13.5px;line-height:13.5px;color:#222">Quantity</div><svg class="r" style="left:1205px;top:636.0px" width="21" height="13" viewBox="0 0 21 13"><path d="M0.5 6.5L6 0.8H20.5V12.2H6Z" fill="#f9b906"/><path d="M0.5 6.5L6 0.8H20.5V6.5Z" fill="#ffd24a"/><path d="M3.5 6.5H20.5V8H5Z" fill="#fde38a" opacity=".5"/></svg><div class="t" style="left:1231.5px;top:636.07px;font-size:13.5px;line-height:13.5px;color:#222">Total</div><svg class="r" style="left:1205px;top:656.0px" width="21" height="13" viewBox="0 0 21 13"><path d="M0.5 6.5L6 0.8H20.5V12.2H6Z" fill="#f9b906"/><path d="M0.5 6.5L6 0.8H20.5V6.5Z" fill="#ffd24a"/><path d="M3.5 6.5H20.5V8H5Z" fill="#fde38a" opacity=".5"/></svg><div class="t" style="left:1231.5px;top:656.07px;font-size:13.5px;line-height:13.5px;color:#222">&lt;New Member&gt;</div><div class="r" style="left:1533px;top:369px;width:251px;height:251px;border-radius:12px;background:#c7d7e7"></div><div class="r" style="left:1526px;top:361px;width:253px;height:254px;border:1.5px solid #cfcfcf"></div><div class="r" style="left:1527px;top:363px;width:251px;height:251px;border-radius:12px;background:#ffffff;overflow:hidden"><div class="r" style="left:0;top:0;width:251px;height:43px;background:#c8ad52"></div></div><svg class="r" style="left:1533px;top:369.8px" width="30" height="30" viewBox="0 0 30 30"><circle cx="15" cy="15" r="15" fill="#fff"/><rect x="5.2" y="6.5" width="14.8" height="18.6" fill="#c9ddf0" stroke="#b4c4d6" stroke-width="0.8"/><rect x="6.5" y="8" width="12" height="5" fill="#e6f2fb"/><rect x="8.2" y="17.3" width="14.9" height="7.9" rx="2" fill="#1e6e2e"/><text x="15.65" y="23.3" text-anchor="middle" font-family="Liberation Sans" font-weight="700" font-size="6" fill="#d8f5d8">XLS</text></svg><div class="t" style="left:1568px;top:376.61px;font-size:17px;line-height:17px;color:#fff">ExcelReport</div><svg class="r" style="left:1746.8px;top:373.8px" width="22" height="22" viewBox="0 0 22 22"><circle cx="11" cy="11" r="10.6" fill="#8f7c3c"/><path d="M3.8 16.2L11 3.2L18.2 16.2Z" fill="#fff"/></svg><svg class="r" style="left:1536px;top:411.0px" width="14" height="14" viewBox="0 0 14 14"><rect x="0.75" y="0.75" width="12.5" height="12.5" rx="1.5" fill="none" stroke="#555" stroke-width="1.5"/><rect x="3.5" y="6.2" width="7" height="1.6" fill="#444"/></svg><svg class="r" style="left:1556px;top:409.5px" width="16" height="16" viewBox="0 0 16 16"><rect x="1.5" y="1.5" width="13" height="13" fill="#98e098" stroke="#5cb85c" stroke-width="3"/></svg><div class="t" style="left:1579.5px;top:411.16px;font-size:13.4px;line-height:13.4px;color:#1a1a1a;font-weight:700">ExcelReport</div><svg class="r" style="left:1553px;top:431.0px" width="21" height="13" viewBox="0 0 21 13"><path d="M0.5 6.5L6 0.8H20.5V12.2H6Z" fill="#f9b906"/><path d="M0.5 6.5L6 0.8H20.5V6.5Z" fill="#ffd24a"/><path d="M3.5 6.5H20.5V8H5Z" fill="#fde38a" opacity=".5"/></svg><div class="t" style="left:1579.5px;top:431.07px;font-size:13.5px;line-height:13.5px;color:#222">CustomerID</div><svg class="r" style="left:1553px;top:451.0px" width="21" height="13" viewBox="0 0 21 13"><path d="M0.5 6.5L6 0.8H20.5V12.2H6Z" fill="#f9b906"/><path d="M0.5 6.5L6 0.8H20.5V6.5Z" fill="#ffd24a"/><path d="M3.5 6.5H20.5V8H5Z" fill="#fde38a" opacity=".5"/></svg><div class="t" style="left:1579.5px;top:451.07px;font-size:13.5px;line-height:13.5px;color:#222">OrderDate</div><svg class="r" style="left:1553px;top:471.0px" width="21" height="13" viewBox="0 0 21 13"><path d="M0.5 6.5L6 0.8H20.5V12.2H6Z" fill="#f9b906"/><path d="M0.5 6.5L6 0.8H20.5V6.5Z" fill="#ffd24a"/><path d="M3.5 6.5H20.5V8H5Z" fill="#fde38a" opacity=".5"/></svg><div class="t" style="left:1579.5px;top:471.07px;font-size:13.5px;line-height:13.5px;color:#222">Total</div><svg class="r" style="left:1553px;top:491.0px" width="21" height="13" viewBox="0 0 21 13"><path d="M0.5 6.5L6 0.8H20.5V12.2H6Z" fill="#f9b906"/><path d="M0.5 6.5L6 0.8H20.5V6.5Z" fill="#ffd24a"/><path d="M3.5 6.5H20.5V8H5Z" fill="#fde38a" opacity=".5"/></svg><div class="t" style="left:1579.5px;top:491.07px;font-size:13.5px;line-height:13.5px;color:#222">&lt;New Member&gt;</div><svg class="r" style="left:0;top:0" width="1917" height="1000" viewBox="0 0 1917 1000"><rect x="677.75" y="338.0" width="14.5" height="7" rx="1.5" fill="#fff" stroke="#cfcfcf" stroke-width="1.5"/><rect x="677" y="357.5" width="16" height="8" rx="1.5" fill="#6cb36c"/><rect x="677" y="377.5" width="16" height="8" rx="1.5" fill="#6cb36c"/><rect x="677" y="397.5" width="16" height="8" rx="1.5" fill="#6cb36c"/><rect x="677" y="417.5" width="16" height="8" rx="1.5" fill="#6cb36c"/><rect x="677" y="437.5" width="16" height="8" rx="1.5" fill="#6cb36c"/><rect x="677" y="457.5" width="16" height="8" rx="1.5" fill="#6cb36c"/><rect x="677" y="477.5" width="16" height="8" rx="1.5" fill="#6cb36c"/><rect x="677" y="497.5" width="16" height="8" rx="1.5" fill="#6cb36c"/><rect x="677" y="517.5" width="16" height="8" rx="1.5" fill="#6cb36c"/><rect x="685.75" y="618.0" width="14.5" height="7" rx="1.5" fill="#fff" stroke="#cfcfcf" stroke-width="1.5"/><rect x="685" y="637.5" width="16" height="8" rx="1.5" fill="#6cb36c"/><rect x="685" y="657.5" width="16" height="8" rx="1.5" fill="#6cb36c"/><rect x="685" y="677.5" width="16" height="8" rx="1.5" fill="#6cb36c"/><rect x="685" y="697.5" width="16" height="8" rx="1.5" fill="#6cb36c"/><rect x="685" y="717.5" width="16" height="8" rx="1.5" fill="#6cb36c"/><path d="M795.5 386.5L809.5 390.5L795.5 394.5Z" fill="#fff" stroke="#d0d0d0" stroke-width="1"/><path d="M795 406.0L810 410.5L795 415.0Z" fill="#6cb36c"/><path d="M795 426.0L810 430.5L795 435.0Z" fill="#6cb36c"/><path d="M795 446.0L810 450.5L795 455.0Z" fill="#6cb36c"/><path d="M795 466.0L810 470.5L795 475.0Z" fill="#6cb36c"/><path d="M795 486.0L810 490.5L795 495.0Z" fill="#6cb36c"/><path d="M795 506.0L810 510.5L795 515.0Z" fill="#6cb36c"/><path d="M795 526.0L810 530.5L795 535.0Z" fill="#6cb36c"/><path d="M795 546.0L810 550.5L795 555.0Z" fill="#6cb36c"/><path d="M795 566.0L810 570.5L795 575.0Z" fill="#6cb36c"/><path d="M795 586.0L810 590.5L795 595.0Z" fill="#6cb36c"/><path d="M795 606.0L810 610.5L795 615.0Z" fill="#6cb36c"/><path d="M795 626.0L810 630.5L795 635.0Z" fill="#6cb36c"/><path d="M795 646.0L810 650.5L795 655.0Z" fill="#6cb36c"/><path d="M795 666.0L810 670.5L795 675.0Z" fill="#6cb36c"/><path d="M795 686.0L810 690.5L795 695.0Z" fill="#6cb36c"/><path d="M795 706.0L810 710.5L795 715.0Z" fill="#6cb36c"/><path d="M795 726.0L810 730.5L795 735.0Z" fill="#6cb36c"/><path d="M795 746.0L810 750.5L795 755.0Z" fill="#6cb36c"/><path d="M795 766.0L810 770.5L795 775.0Z" fill="#6cb36c"/><rect x="1061.75" y="387.0" width="14.5" height="7" rx="1.5" fill="#fff" stroke="#cfcfcf" stroke-width="1.5"/><rect x="1061.75" y="407.0" width="14.5" height="7" rx="1.5" fill="#fff" stroke="#cfcfcf" stroke-width="1.5"/><rect x="1061" y="426.5" width="16" height="8" rx="1.5" fill="#a985c0"/><rect x="1061.75" y="447.0" width="14.5" height="7" rx="1.5" fill="#fff" stroke="#cfcfcf" stroke-width="1.5"/><rect x="1061" y="466.5" width="16" height="8" rx="1.5" fill="#a985c0"/><rect x="1061.75" y="487.0" width="14.5" height="7" rx="1.5" fill="#fff" stroke="#cfcfcf" stroke-width="1.5"/><rect x="1061.75" y="507.0" width="14.5" height="7" rx="1.5" fill="#fff" stroke="#cfcfcf" stroke-width="1.5"/><rect x="1061.75" y="527.0" width="14.5" height="7" rx="1.5" fill="#fff" stroke="#cfcfcf" stroke-width="1.5"/><rect x="1061.75" y="547.0" width="14.5" height="7" rx="1.5" fill="#fff" stroke="#cfcfcf" stroke-width="1.5"/><rect x="1061.75" y="567.0" width="14.5" height="7" rx="1.5" fill="#fff" stroke="#cfcfcf" stroke-width="1.5"/><rect x="1061.75" y="587.0" width="14.5" height="7" rx="1.5" fill="#fff" stroke="#cfcfcf" stroke-width="1.5"/><rect x="1061.75" y="607.0" width="14.5" height="7" rx="1.5" fill="#fff" stroke="#cfcfcf" stroke-width="1.5"/><rect x="1061.75" y="627.0" width="14.5" height="7" rx="1.5" fill="#fff" stroke="#cfcfcf" stroke-width="1.5"/><rect x="1061.75" y="647.0" width="14.5" height="7" rx="1.5" fill="#fff" stroke="#cfcfcf" stroke-width="1.5"/><rect x="1061.75" y="667.0" width="14.5" height="7" rx="1.5" fill="#fff" stroke="#cfcfcf" stroke-width="1.5"/><rect x="1061.75" y="687.0" width="14.5" height="7" rx="1.5" fill="#fff" stroke="#cfcfcf" stroke-width="1.5"/><rect x="1061.75" y="707.0" width="14.5" height="7" rx="1.5" fill="#fff" stroke="#cfcfcf" stroke-width="1.5"/><rect x="1061" y="726.5" width="16" height="8" rx="1.5" fill="#a985c0"/><rect x="1061" y="746.5" width="16" height="8" rx="1.5" fill="#a985c0"/><rect x="1061.75" y="767.0" width="14.5" height="7" rx="1.5" fill="#fff" stroke="#cfcfcf" stroke-width="1.5"/><path d="M693 361.5H705L781 410.5H796" fill="none" stroke="#72b872" stroke-width="1.15"/><path d="M693 381.5H705L781 430.5H796" fill="none" stroke="#72b872" stroke-width="1.15"/><path d="M693 401.5H705L781 450.5H796" fill="none" stroke="#72b872" stroke-width="1.15"/><path d="M693 421.5H705L781 470.5H796" fill="none" stroke="#72b872" stroke-width="1.15"/><path d="M693 441.5H705L781 490.5H796" fill="none" stroke="#72b872" stroke-width="1.15"/><path d="M693 461.5H705L781 510.5H796" fill="none" stroke="#72b872" stroke-width="1.15"/><path d="M693 481.5H705L781 530.5H796" fill="none" stroke="#72b872" stroke-width="1.15"/><path d="M693 501.5H705L781 550.5H796" fill="none" stroke="#72b872" stroke-width="1.15"/><path d="M693 521.5H705L781 570.5H796" fill="none" stroke="#72b872" stroke-width="1.15"/><path d="M693 521.5H705L781 590.5H796" fill="none" stroke="#72b872" stroke-width="1.15"/><path d="M693 521.5H705L781 610.5H796" fill="none" stroke="#72b872" stroke-width="1.15"/><path d="M693 521.5H705L781 630.5H796" fill="none" stroke="#72b872" stroke-width="1.15"/><path d="M693 521.5H705L781 650.5H796" fill="none" stroke="#72b872" stroke-width="1.15"/><path d="M693 521.5H705L781 670.5H796" fill="none" stroke="#72b872" stroke-width="1.15"/><path d="M701 641.5H712L781.5 690.5H796" fill="none" stroke="#72b872" stroke-width="1.15"/><path d="M701 661.5H712L781.5 710.5H796" fill="none" stroke="#72b872" stroke-width="1.15"/><path d="M701 681.5H712L781.5 730.5H796" fill="none" stroke="#72b872" stroke-width="1.15"/><path d="M701 701.5H712L781.5 750.5H796" fill="none" stroke="#72b872" stroke-width="1.15"/><path d="M701 721.5H712L781.5 770.5H796" fill="none" stroke="#72b872" stroke-width="1.15"/><path d="M1077 430.5H1088L1500 437.5H1512" fill="none" stroke="#ad8bc4" stroke-width="1.15"/><path d="M1077 470.5H1088L1500 457.5H1512" fill="none" stroke="#ad8bc4" stroke-width="1.15"/><path d="M1077 730.5H1089L1151 602.5H1164" fill="none" stroke="#ad8bc4" stroke-width="1.15"/><path d="M1077 750.5H1089L1151 622.5H1164" fill="none" stroke="#ad8bc4" stroke-width="1.15"/><path d="M1164.5 578.5L1178.5 582.5L1164.5 586.5Z" fill="#fff" stroke="#d0d0d0" stroke-width="1"/><path d="M1164 598.0L1179 602.5L1164 607.0Z" fill="#a985c0"/><path d="M1164 618.0L1179 622.5L1164 627.0Z" fill="#a985c0"/><path d="M1164.5 658.5L1178.5 662.5L1164.5 666.5Z" fill="#fff" stroke="#d0d0d0" stroke-width="1"/><rect x="1430.75" y="579.0" width="14.5" height="7" rx="1.5" fill="#fff" stroke="#cfcfcf" stroke-width="1.5"/><rect x="1430.75" y="599.0" width="14.5" height="7" rx="1.5" fill="#fff" stroke="#cfcfcf" stroke-width="1.5"/><rect x="1430.75" y="619.0" width="14.5" height="7" rx="1.5" fill="#fff" stroke="#cfcfcf" stroke-width="1.5"/><rect x="1430" y="638.5" width="16" height="8" rx="1.5" fill="#6aa6d2"/><path d="M1446 642.5H1457L1499.5 477.5H1512" fill="none" stroke="#6ca8d4" stroke-width="1.15"/><path d="M1512.5 413.5L1526.5 417.5L1512.5 421.5Z" fill="#fff" stroke="#d0d0d0" stroke-width="1"/><path d="M1512 433.0L1527 437.5L1512 442.0Z" fill="#a985c0"/><path d="M1512 453.0L1527 457.5L1512 462.0Z" fill="#a985c0"/><path d="M1512 473.0L1527 477.5L1512 482.0Z" fill="#6aa6d2"/><path d="M1512.5 493.5L1526.5 497.5L1512.5 501.5Z" fill="#fff" stroke="#d0d0d0" stroke-width="1"/><rect x="1779.75" y="414.0" width="14.5" height="7" rx="1.5" fill="#fff" stroke="#cfcfcf" stroke-width="1.5"/><rect x="1779.75" y="434.0" width="14.5" height="7" rx="1.5" fill="#fff" stroke="#cfcfcf" stroke-width="1.5"/><rect x="1779.75" y="454.0" width="14.5" height="7" rx="1.5" fill="#fff" stroke="#cfcfcf" stroke-width="1.5"/><rect x="1779.75" y="474.0" width="14.5" height="7" rx="1.5" fill="#fff" stroke="#cfcfcf" stroke-width="1.5"/></svg><svg class="r" style="left:0;top:0" width="1917" height="90" viewBox="0 0 1917 90"><rect x="14.5" y="38" width="1.2" height="1.2" fill="#c2c2c2"/><rect x="19.8" y="38" width="1.2" height="1.2" fill="#c2c2c2"/><rect x="17.2" y="40.5" width="1.2" height="1.2" fill="#c2c2c2"/><rect x="14.5" y="43.0" width="1.2" height="1.2" fill="#c2c2c2"/><rect x="19.8" y="43.0" width="1.2" height="1.2" fill="#c2c2c2"/><rect x="17.2" y="45.5" width="1.2" height="1.2" fill="#c2c2c2"/><rect x="14.5" y="48.0" width="1.2" height="1.2" fill="#c2c2c2"/><rect x="19.8" y="48.0" width="1.2" height="1.2" fill="#c2c2c2"/><rect x="17.2" y="50.5" width="1.2" height="1.2" fill="#c2c2c2"/><rect x="14.5" y="53.0" width="1.2" height="1.2" fill="#c2c2c2"/><rect x="19.8" y="53.0" width="1.2" height="1.2" fill="#c2c2c2"/><rect x="17.2" y="55.5" width="1.2" height="1.2" fill="#c2c2c2"/><rect x="14.5" y="58.0" width="1.2" height="1.2" fill="#c2c2c2"/><rect x="19.8" y="58.0" width="1.2" height="1.2" fill="#c2c2c2"/><rect x="17.2" y="60.5" width="1.2" height="1.2" fill="#c2c2c2"/><rect x="14.5" y="63.0" width="1.2" height="1.2" fill="#c2c2c2"/><rect x="19.8" y="63.0" width="1.2" height="1.2" fill="#c2c2c2"/><rect x="17.2" y="65.5" width="1.2" height="1.2" fill="#c2c2c2"/><rect x="14.5" y="68.0" width="1.2" height="1.2" fill="#c2c2c2"/><rect x="19.8" y="68.0" width="1.2" height="1.2" fill="#c2c2c2"/><rect x="17.2" y="70.5" width="1.2" height="1.2" fill="#c2c2c2"/><rect x="14.5" y="73.0" width="1.2" height="1.2" fill="#c2c2c2"/><rect x="19.8" y="73.0" width="1.2" height="1.2" fill="#c2c2c2"/><rect x="32.5" y="45.0" width="8" height="9" fill="#fff" stroke="#7a7a7a" stroke-width="1"/><rect x="32" y="44.5" width="9" height="3" fill="#3a68ad"/><circle cx="34.5" cy="46.5" r="3.2" fill="#f7e04a"/><circle cx="34.5" cy="46.5" r="1.8" fill="#fff59a"/><rect x="46.5" y="48.0" width="7.5" height="9" fill="#fff" stroke="#7a7a7a" stroke-width="1"/><rect x="46" y="47.5" width="8.5" height="3" fill="#3a68ad"/><rect x="33.5" y="58.0" width="8" height="8" fill="#fff" stroke="#7a7a7a" stroke-width="1"/><rect x="33" y="57.5" width="9" height="3" fill="#3a68ad"/><path d="M40 50L46 53M40 55L46 55" stroke="#8a8a8a" stroke-width="1"/><path d="M65.5 55H72L68.75 59Z" fill="#111"/><path d="M84 51H91L93 53H102V56H84Z" fill="#ebb75e"/><rect x="88" y="50" width="13" height="8" rx="1" fill="#fff8e8" stroke="#f0d8a8" stroke-width="0.8"/><path d="M84 66L87 56H106L103 66Z" fill="#ebb75e"/><path d="M84 66V52" stroke="#ebb75e" stroke-width="2"/><path d="M120.3 46.8Q120.3 45.8 121.3 45.8H142.3V66.8Q142.3 67.8 141.3 67.8H121.3Q120.3 67.8 120.3 66.8Z" fill="#6e3d9f"/><rect x="123.3" y="46.8" width="16" height="10.5" fill="#fff"/><rect x="125.3" y="60.8" width="12" height="7" fill="#fff"/><rect x="128.8" y="62.3" width="2.5" height="5.5" fill="#6e3d9f"/><rect x="158" y="45.3" width="17.5" height="18" rx="1" fill="#bda6d8"/><rect x="160" y="46.8" width="17.5" height="18.5" rx="1" fill="#9c7ac6"/><g transform="translate(162 48.3) scale(0.84 0.87) translate(-162 -48.3)"><path d="M162 49.3Q162 48.3 163 48.3H184V69.3Q184 70.3 183 70.3H163Q162 70.3 162 69.3Z" fill="#6e3d9f"/><rect x="165" y="49.3" width="16" height="10.5" fill="#fff"/><rect x="167" y="63.3" width="12" height="7" fill="#fff"/><rect x="170.5" y="64.8" width="2.5" height="5.5" fill="#6e3d9f"/></g><rect x="191" y="42" width="1" height="29" fill="#d6dbe1"/><rect x="311" y="42" width="1" height="29" fill="#d6dbe1"/><rect x="393.5" y="42" width="1" height="29" fill="#d6dbe1"/><rect x="438.5" y="42" width="1" height="29" fill="#d6dbe1"/><rect x="483.5" y="42" width="1" height="29" fill="#d6dbe1"/><rect x="566" y="42" width="1" height="29" fill="#d6dbe1"/><path d="M206 44.5L219 60M221 44.5L208 60" stroke="#5a5a5a" stroke-width="2.3" stroke-linecap="round"/><circle cx="208" cy="62.5" r="4" fill="none" stroke="#5b88bd" stroke-width="2"/><circle cx="220.5" cy="62.5" r="4" fill="none" stroke="#5b88bd" stroke-width="2"/><path d="M241.5 45.5H250.5L253.5 48.5V60H241.5Z" fill="#fff" stroke="#8a8a8a" stroke-width="1"/><path d="M243.5 50H251M243.5 53H251M243.5 56H251" stroke="#5b8dc8" stroke-width="1"/><path d="M249.5 52H258.5L261.5 55V67H249.5Z" fill="#fff" stroke="#8a8a8a" stroke-width="1.2"/><path d="M251.5 57H259.5M251.5 60H259.5M251.5 63H259.5" stroke="#5b8dc8" stroke-width="1.2"/><rect x="279.5" y="46.5" width="18" height="18" fill="#e2e2e2"/><rect x="284" y="45" width="9" height="3.5" fill="#cfcfcf"/><path d="M288.5 54H296.5L300 57.5V67H288.5Z" fill="#fbfbfb" stroke="#c8c8c8" stroke-width="1"/><path d="M322 61.5V49L326 52.5Q336 45 345.5 55.5L343 57Q335 50.5 328.5 55L332.5 58.5Z" fill="#3a72bd"/><path d="M384 61.5V49L380 52.5Q370 45 360.5 55.5L363 57Q371 50.5 377.5 55L373.5 58.5Z" fill="#b9b9b9"/><text x="404" y="64.6" font-family="Liberation Serif" font-weight="700" font-style="italic" font-size="19" fill="#585858" letter-spacing="-0.5">Aa</text><rect x="452" y="52" width="7.5" height="13" rx="1.5" fill="#b4b4b4"/><rect x="463" y="52" width="7.5" height="13" rx="1.5" fill="#b4b4b4"/><rect x="454" y="47.5" width="4" height="6" fill="#b4b4b4"/><rect x="464.5" y="47.5" width="4" height="6" fill="#b4b4b4"/><rect x="458" y="53" width="6" height="5" fill="#a8a8a8"/><path d="M462 64H471M468 61L471.5 64L468 67" stroke="#a8a8a8" stroke-width="1.8" fill="none"/><rect x="494.5" y="47.0" width="22" height="19.5" fill="#fff" stroke="#8e8e8e" stroke-width="1"/><rect x="494" y="46.5" width="23" height="4" fill="#3563a8"/><path d="M507 62L510.5 66L518 57.5" stroke="#3f8f62" stroke-width="3" fill="none"/><rect x="532.5" y="46.5" width="9" height="8" fill="#fff" stroke="#7c7c7c" stroke-width="1"/><rect x="532" y="46" width="10" height="2.5" fill="#3a68ad"/><rect x="545.5" y="48.0" width="8.5" height="7" fill="#fff" stroke="#7c7c7c" stroke-width="1"/><rect x="545" y="47.5" width="9.5" height="2.5" fill="#3a68ad"/><rect x="533.5" y="58.0" width="8.5" height="8" fill="#fff" stroke="#7c7c7c" stroke-width="1"/><rect x="533" y="57.5" width="9.5" height="2.5" fill="#3a68ad"/><path d="M543.7 51V65.2L556.3 58Z" fill="#23ad1e"/><path d="M580 47.5Q587.3 43.5 594.7 47.5V64Q587.3 68 580 64Z" fill="#ebbe6a"/><ellipse cx="587.3" cy="47.5" rx="7.3" ry="2.8" fill="#f3d08f"/><rect x="589.5" y="59.5" width="12.5" height="9" fill="#fff" stroke="#8a8a8a" stroke-width="1.2"/><path d="M592 62.5H600M592 65.5H600" stroke="#9a9a9a" stroke-width="1"/><path d="M588 58L590 60L593.5 56" stroke="#3f8f62" stroke-width="1.5" fill="none"/><path d="M615.5 52Q622.5 48.5 629.7 52V64.5Q622.5 68 615.5 64.5Z" fill="#f4d596"/><ellipse cx="622.6" cy="52" rx="7" ry="2.5" fill="#f8e2b4"/><path d="M622.3 43.5V51M619 48L622.3 52L625.6 48" stroke="#4a80c0" stroke-width="2.2" fill="none"/><path d="M626.8 52V66.4L639 59.2Z" fill="#23ad1e"/><circle cx="664.5" cy="56.1" r="11.6" fill="#2f64a8"/><text x="664.5" y="63" text-anchor="middle" font-family="Liberation Sans" font-weight="700" font-size="18" fill="#fff">?</text><path d="M691 50.5H698L700 52.5H709V55.5H691Z" fill="#ebb75e"/><rect x="695" y="49.5" width="13" height="8" rx="1" fill="#fff8e8" stroke="#f0d8a8" stroke-width="0.8"/><path d="M691 65.5L694 55.5H713L710 65.5Z" fill="#ebb75e"/><path d="M691 65.5V51.5" stroke="#ebb75e" stroke-width="2"/><rect x="727.5" y="46.5" width="21" height="18" fill="#f4f4f4" stroke="#c8c8c8" stroke-width="1"/><rect x="727" y="46" width="22" height="3" fill="#3563a8"/><path d="M728 55H748M738 49V64" stroke="#c8c8c8" stroke-width="1.5"/><path d="M742.5 62L746.5 58L750.5 62V66H742.5Z" fill="#f28a1e"/><rect x="766.5" y="67" width="7" height="1.3" fill="#111"/><path d="M766.3 69.5H773.3L769.8 73.8Z" fill="#111"/><rect x="1622" y="40.5" width="1.2" height="1.2" fill="#c2c2c2"/><rect x="1627.3" y="40.5" width="1.2" height="1.2" fill="#c2c2c2"/><rect x="1624.7" y="43.0" width="1.2" height="1.2" fill="#c2c2c2"/><rect x="1622" y="45.5" width="1.2" height="1.2" fill="#c2c2c2"/><rect x="1627.3" y="45.5" width="1.2" height="1.2" fill="#c2c2c2"/><rect x="1624.7" y="48.0" width="1.2" height="1.2" fill="#c2c2c2"/><rect x="1622" y="50.5" width="1.2" height="1.2" fill="#c2c2c2"/><rect x="1627.3" y="50.5" width="1.2" height="1.2" fill="#c2c2c2"/><rect x="1624.7" y="53.0" width="1.2" height="1.2" fill="#c2c2c2"/><rect x="1622" y="55.5" width="1.2" height="1.2" fill="#c2c2c2"/><rect x="1627.3" y="55.5" width="1.2" height="1.2" fill="#c2c2c2"/><rect x="1624.7" y="58.0" width="1.2" height="1.2" fill="#c2c2c2"/><rect x="1622" y="60.5" width="1.2" height="1.2" fill="#c2c2c2"/><rect x="1627.3" y="60.5" width="1.2" height="1.2" fill="#c2c2c2"/><rect x="1624.7" y="63.0" width="1.2" height="1.2" fill="#c2c2c2"/><rect x="1622" y="65.5" width="1.2" height="1.2" fill="#c2c2c2"/><rect x="1627.3" y="65.5" width="1.2" height="1.2" fill="#c2c2c2"/><rect x="1624.7" y="68.0" width="1.2" height="1.2" fill="#c2c2c2"/><rect x="1622" y="70.5" width="1.2" height="1.2" fill="#c2c2c2"/><rect x="1627.3" y="70.5" width="1.2" height="1.2" fill="#c2c2c2"/><g transform="rotate(-45 1702 56)"><path d="M1689 56H1715" stroke="#23943a" stroke-width="4.2" stroke-linecap="round"/><rect x="1696.5" y="50.5" width="11" height="11" rx="2.5" fill="#2aa844"/><path d="M1702 50.5V61.5" stroke="#17702a" stroke-width="1.3"/><path d="M1698 53H1701" stroke="#7ee898" stroke-width="1.6"/></g><path d="M1889.3 43.6A12.5 12.5 0 0 1 1901.8 56.1A12.6 12.6 0 0 1 1889.3 68.8H1877L1880.5 64.5A12.5 12.5 0 0 1 1889.3 43.6Z" fill="#2e65a3"/><path d="M1884.5 51.4H1895M1884.5 56.2H1895M1884.5 60.6H1890" stroke="#fff" stroke-width="2.6" stroke-linecap="round"/></svg><svg class="r" style="left:0;top:0" width="60" height="889" viewBox="0 0 60 889"><path d="M20.2 227.5Q29 222 38 227.5V249.5Q29 254.5 20.2 249.5Z" fill="#cdc66a"/><ellipse cx="29.1" cy="227.5" rx="8.9" ry="3" fill="#ddd78a"/><rect x="28.5" y="239.5" width="19" height="12.5" rx="1.5" fill="#40c0b6" stroke="#2c6e6e" stroke-width="1.2"/><path d="M35.5 243L33 245.7L35.5 248.4M40.5 243L43 245.7L40.5 248.4" stroke="#1e4a4a" stroke-width="1.3" fill="none"/><path d="M19.7 277.3H48.2L44.5 284.3H23.4Z" fill="#c8d4fb"/><path d="M19.7 277.3L24 284.3M48.2 277.3L44 284.3" stroke="#2a4ee8" stroke-width="1.8"/><rect x="22" y="284.2" width="24.5" height="2" fill="#2a4ee8"/><path d="M26 283.5V279.5M29.5 283.5V280.5M33.5 283.5V277M37.5 283.5V280.5M41.5 283.5V279.5" stroke="#2a4ee8" stroke-width="1.4"/><path d="M21 277.6H47" stroke="#6a86f0" stroke-width="0.8"/><path d="M19.7 324.5Q27 316 36 316Q43 316 47.5 318.5Q41 327 31 327Q24 327 19.7 324.5Z" fill="#cfe6f2"/><path d="M20.5 324Q27 316.2 36 316.2Q43 316.2 47.5 318.5" stroke="#2b2b2b" stroke-width="1.2" fill="none"/><path d="M22 325.5Q31 329 42 322" stroke="#555" stroke-width="1" fill="none"/><circle cx="33.8" cy="321" r="4.8" fill="#3a8aa0"/><circle cx="33.8" cy="321" r="2.1" fill="#f4fbff"/><path d="M43 317L47.5 316" stroke="#222" stroke-width="1.4"/><circle cx="34.2" cy="366" r="14.7" fill="#2e3192"/><path d="M39 359.5A7.5 7.5 0 1 0 39 372.5" stroke="#fff" stroke-width="3.2" fill="none"/><rect x="19.8" y="394.8" width="11.5" height="6.8" fill="#eef2f8" stroke="#3a6ad0" stroke-width="1.6"/><rect x="36.8" y="398.5" width="11.5" height="8" fill="#eef2f8" stroke="#3a6ad0" stroke-width="1.6"/><rect x="19.8" y="407" width="11.5" height="12.5" fill="#eef2f8" stroke="#3a6ad0" stroke-width="1.6"/><rect x="36.8" y="412" width="11.5" height="8.3" fill="#eef2f8" stroke="#3a6ad0" stroke-width="1.6"/><path d="M25.5 401.6V407M31.3 410H36.8M31.3 402H36.8" stroke="#3a6ad0" stroke-width="1.4"/><path d="M20.2 440Q29 435 38 440V462Q29 467 20.2 462Z" fill="#c9c46a"/><ellipse cx="29.1" cy="440" rx="8.9" ry="3" fill="#dcd68a"/><rect x="28" y="450" width="20.3" height="14.5" fill="#7c7c7c"/><rect x="29.5" y="454.5" width="5" height="3.5" fill="#fff"/><rect x="29.5" y="459.5" width="5" height="3.5" fill="#fff"/><rect x="36" y="454.5" width="5" height="3.5" fill="#fff"/><rect x="36" y="459.5" width="5" height="3.5" fill="#fff"/><rect x="42.2" y="454.5" width="5" height="3.5" fill="#fff"/><rect x="42.2" y="459.5" width="5" height="3.5" fill="#fff"/><rect x="28" y="449.5" width="7" height="3" fill="#e07030"/><path d="M19.4 483Q29.6 476 39.8 483V505Q29.6 512 19.4 505Z" fill="#3a9ad8"/><path d="M19.4 490Q29.6 496 39.8 490M19.4 498Q29.6 504 39.8 498" stroke="#bfe4fa" stroke-width="1.5" fill="none"/><path d="M29.6 477V510" stroke="#5ab8f0" stroke-width="0" /><path d="M46 487L40 497" stroke="#666" stroke-width="2.6"/><path d="M33 505L38 495L44 499L48 508Z" fill="#f7a830"/><path d="M31 502L38 495L40 506Z" fill="#f8c040"/><path d="M24 521.5H38L44.9 528.5V549Q44.9 551.3 42.6 551.3H24Q21.9 551.3 21.9 549V523.6Q21.9 521.5 24 521.5Z" fill="#6a9ad0"/><path d="M38 521.5V528.5H44.9Z" fill="#fff"/><path d="M33.5 536.5H37V540L33.5 546H31L33.5 540Z" fill="#fff"/><path d="M22.8 568Q34.2 561 45.7 568V588Q34.2 595 22.8 588Z" fill="#2a5ab0"/><path d="M22.8 574Q34.2 579 45.7 574M22.8 581Q34.2 586 45.7 581" stroke="#1a3a80" stroke-width="1.6" fill="none"/><path d="M28 566V592" stroke="#4a7ad0" stroke-width="3" opacity=".5"/><path d="M20 631V615L32 606.5L42 614" stroke="#6a6a6a" stroke-width="1.3" fill="none"/><path d="M22.5 633V617L33 609L45 617.5V623" stroke="#6a6a6a" stroke-width="1.3" fill="none"/><rect x="28.7" y="623.5" width="20.8" height="12.7" fill="#d5cd7a"/><path d="M28.7 623.5L39 631L49.5 623.5" stroke="#f4efc8" stroke-width="1.3" fill="none"/><path d="M20.8 651H36L41.5 656.5V678H20.8Z" fill="#fff" stroke="#8a8a8a" stroke-width="1"/><path d="M29 660L40 657.5V679L29 676.5Z" fill="#217346"/><rect x="40" y="661" width="10" height="14" fill="#fff" stroke="#217346" stroke-width="1.4"/><path d="M42 665H48M42 668H48M42 671H48" stroke="#217346" stroke-width="1.2"/><text x="34.5" y="672.5" text-anchor="middle" font-family="Liberation Sans" font-weight="700" font-size="9" fill="#fff">X</text><rect x="21" y="694" width="22.5" height="26" fill="#fff" stroke="#8a8a8a" stroke-width="1.1"/><rect x="21" y="693.2" width="23" height="3" fill="#3a90d0"/><path d="M24 700H40M24 703H40M24 706H40M24 709H36M24 712H34" stroke="#aaa" stroke-width="1"/><rect x="35" y="711" width="14.5" height="11" fill="#fff" stroke="#8a8a8a" stroke-width="1.1"/><path d="M38 715H47M38 718H47" stroke="#8a8a8a" stroke-width="1"/><circle cx="28" cy="748.5" r="7.2" fill="#f5c518"/><circle cx="28.5" cy="748.5" r="3.8" fill="#505050"/><rect x="24.78" y="754.08" width="3.8" height="3.8" fill="#f5c518"/><rect x="20.73" y="751.97" width="3.8" height="3.8" fill="#f5c518"/><rect x="18.50" y="746.60" width="3.8" height="3.8" fill="#f5c518"/><rect x="20.73" y="741.23" width="3.8" height="3.8" fill="#f5c518"/><rect x="24.78" y="739.12" width="3.8" height="3.8" fill="#f5c518"/><rect x="29.6" y="736" width="9.5" height="25" fill="#fcf4c0"/><path d="M39 736H45L48.3 740V761H39Z" fill="#f2d2b4"/><path d="M33 742H42M33 746H45M33 750H45M33 754H42" stroke="#444" stroke-width="1.5"/><path d="M28 779.5H22Q20.5 779.5 20.5 781V802.5Q20.5 804.5 22.5 804.5H28" stroke="#3a90c8" stroke-width="1.6" fill="none"/><path d="M25.5 801.5L29 804.5L25.5 807.5" stroke="#3a90c8" stroke-width="1.6" fill="none"/><rect x="29.6" y="781.5" width="18.2" height="1.2" fill="#a8a8a8"/><rect x="33" y="784.5" width="14.8" height="1.2" fill="#a8a8a8"/><rect x="33" y="787.5" width="14.8" height="1.2" fill="#a8a8a8"/><rect x="33" y="790.5" width="14.8" height="1.2" fill="#a8a8a8"/><rect x="33" y="793.5" width="14.8" height="1.2" fill="#a8a8a8"/><rect x="33" y="796.5" width="14.8" height="1.2" fill="#a8a8a8"/><rect x="29.6" y="799.5" width="18.2" height="1.2" fill="#a8a8a8"/><path d="M20.5 822H25.5L27 820H31.5L33.8 822V832.6H20.5Z" fill="#fbc89a"/><rect x="20.5" y="834.2" width="13.3" height="1.4" fill="#3a90c8"/><path d="M33.8 835H39L40.5 833H45.5L47.8 835V845.3H33.8Z" fill="#fbc89a"/><rect x="34" y="846.5" width="13.8" height="1.4" fill="#3a90c8"/><rect x="29.5" y="862.5" width="9" height="9.5" fill="#f5c030"/><path d="M31 865.5H37M31 868.5H37" stroke="#fff" stroke-width="1"/><rect x="19.5" y="866.5" width="9" height="7" fill="#8aa0b8"/><rect x="40.5" y="866.5" width="9" height="7" fill="#8aa0b8"/><path d="M24 874V877H45V874M34 872V880" stroke="#3a90c8" stroke-width="1.2" fill="none"/><rect x="26" y="880" width="16" height="8" fill="#40b8e0"/><rect x="24" y="888" width="20" height="1.5" fill="#7a7a7a"/></svg><svg class="r" style="left:0;top:130px" width="1917" height="50" viewBox="0 130 1917 50"><path d="M324.5 158.8V146L328.5 149.5Q338.5 141.5 348 152.5L345.5 154Q337.5 147.5 331 152L335 155.5Z" fill="#3d72b8"/><path d="M357.6 152.1H364.7L361.15 156.3Z" fill="#111"/><path d="M398.9 158.8V146L394.9 149.5Q384.9 141.5 375.4 152.5L377.9 154Q385.9 147.5 392.4 152L388.4 155.5Z" fill="#bdbdbd"/><path d="M408 152.1H414.3L411.15 156.3Z" fill="#a9a9a9"/><rect x="432.5" y="141.8" width="24" height="23.6" fill="#fff" stroke="#8a8a8a" stroke-width="1"/><rect x="432" y="141.3" width="25" height="3" fill="#4a7ab8"/><rect x="438" y="143" width="1.3" height="22" fill="#8a8a8a"/><rect x="441.1" y="145.9" width="6.5" height="8" fill="#eee" stroke="#9a9a9a" stroke-width="1"/><rect x="440.6" y="145.4" width="7.5" height="2.5" fill="#4a7ab8"/><rect x="447.0" y="155.5" width="6.5" height="8" fill="#eee" stroke="#9a9a9a" stroke-width="1"/><rect x="446.5" y="155" width="7.5" height="2.5" fill="#4a7ab8"/><rect x="590.4" y="142.5" width="22.2" height="21.7" fill="#6fa5d5"/><rect x="592.5" y="145" width="17.5" height="5" fill="none" stroke="#fff" stroke-width="1"/><path d="M606 146.5H609L607.5 148.5Z" fill="#fff"/><rect x="592.5" y="151.2" width="17.5" height="1.4" fill="#fff"/><path d="M601.5 154.5V162.5M599 157L601.5 154.5L604 157M599 160L601.5 162.5L604 160" stroke="#fff" stroke-width="1.6" fill="none"/><rect x="627.7" y="141.8" width="6.6" height="7.8" fill="#fff" stroke="#666" stroke-width="1.2"/><rect x="629.5" y="145" width="3" height="1" fill="#335"/><rect x="636" y="144.8" width="15.8" height="1.3" fill="#3a6aa8"/><rect x="636" y="155" width="15.8" height="1.1" fill="#8a8a8a"/><rect x="636" y="165" width="15.8" height="1.1" fill="#8a8a8a"/><rect x="664.8" y="141.3" width="6.6" height="7.4" fill="#fff" stroke="#777" stroke-width="1.2"/><rect x="667.6" y="144.4" width="1.2" height="1.2" fill="#3a6aa8"/><rect x="673.5" y="144" width="15.4" height="2" fill="#9ab4d0"/><rect x="664.8" y="150.10000000000002" width="6.6" height="7.4" fill="#fff" stroke="#777" stroke-width="1.2"/><rect x="667.6" y="153.20000000000002" width="1.2" height="1.2" fill="#3a6aa8"/><rect x="673.5" y="152.8" width="15.4" height="2" fill="#9ab4d0"/><rect x="664.8" y="158.8" width="6.6" height="7.4" fill="#fff" stroke="#777" stroke-width="1.2"/><rect x="667.6" y="161.9" width="1.2" height="1.2" fill="#3a6aa8"/><rect x="673.5" y="161.5" width="15.4" height="2" fill="#9ab4d0"/><rect x="712" y="145" width="15.7" height="14.6" fill="#333"/><rect x="713.5" y="149" width="3.2" height="2.2" fill="#fff"/><rect x="713.5" y="152.5" width="3.2" height="2.2" fill="#fff"/><rect x="713.5" y="156" width="3.2" height="2.2" fill="#fff"/><rect x="718.5" y="149" width="3.2" height="2.2" fill="#fff"/><rect x="718.5" y="152.5" width="3.2" height="2.2" fill="#fff"/><rect x="718.5" y="156" width="3.2" height="2.2" fill="#fff"/><rect x="723" y="149" width="3.2" height="2.2" fill="#fff"/><rect x="723" y="152.5" width="3.2" height="2.2" fill="#fff"/><rect x="723" y="156" width="3.2" height="2.2" fill="#fff"/><path d="M713.3 143.8V151M709.7 147.4H717" stroke="#5cba4a" stroke-width="2.4"/><path d="M751 143.5L772 163.7" stroke="#4a7cb5" stroke-width="1.8"/><path d="M749.2 141.7L756 143.5L751 148.5Z" fill="#4a7cb5"/><path d="M773.8 165.5L767 163.7L772 158.7Z" fill="#4a7cb5"/><rect x="787.7" y="141.8" width="23.6" height="23.6" fill="#fff" stroke="#8a8a8a" stroke-width="1"/><rect x="787.2" y="141.3" width="24.6" height="3" fill="#4a7ab8"/><text x="789" y="152.5" font-family="Liberation Mono" font-size="6" fill="#aaa" letter-spacing="-0.6">010 01</text><text x="789" y="162" font-family="Liberation Mono" font-size="6" fill="#aaa">10</text><rect x="801.4" y="155" width="10.4" height="10.9" fill="#fff" stroke="#8a8a8a" stroke-width="1"/><path d="M803.5 160.5L805.5 163L810 157.5" stroke="#3a6ab0" stroke-width="1.6" fill="none"/><path d="M836.2 141.3L847.3 145.5V153Q847.3 161.5 836.2 166.3Q825.1 161.5 825.1 153V145.5Z" fill="#2eaae8"/><path d="M832 154L835 157L840.5 151.5" stroke="#fff" stroke-width="2.2" fill="none"/><rect x="862.4" y="141.8" width="24" height="23.6" fill="#fff" stroke="#8a8a8a" stroke-width="1"/><rect x="861.9" y="141.3" width="25" height="3" fill="#4a7ab8"/><path d="M865 155V148H880" stroke="#5cba4a" stroke-width="1" fill="none"/><rect x="868.0" y="148.0" width="7.5" height="5" fill="#ddd" stroke="#888" stroke-width="1"/><rect x="867.5" y="147.5" width="8.5" height="1.5" fill="#4a7ab8"/><rect x="864.0" y="155.5" width="7.5" height="6" fill="#ddd" stroke="#888" stroke-width="1"/><rect x="863.5" y="155" width="8.5" height="1.5" fill="#4a7ab8"/><rect x="877.5" y="151.5" width="7.5" height="4" fill="#fff" stroke="#888" stroke-width="1"/><rect x="877" y="151" width="8.5" height="1.5" fill="#4a7ab8"/><circle cx="879.5" cy="159.5" r="4" fill="#eef" stroke="#9ab" stroke-width="1"/><rect x="908.5" y="145.4" width="16.7" height="16.8" fill="none" stroke="#dedede" stroke-width="1.1"/><rect x="908.7" y="154.5" width="8" height="8" fill="#f8f8f8" stroke="#a0a0a0" stroke-width="1.4"/><path d="M915 155L923.5 146.5" stroke="#a8a8a8" stroke-width="2"/><path d="M925.7 144.9L925.7 151.5L919.2 144.9Z" fill="#a8a8a8"/><path d="M945 145.2Q951.5 145 952.5 151M953 155Q952.5 161.5 959 161.5" stroke="#3a7ac0" stroke-width="1.7" fill="none"/><rect x="938.8" y="142.7" width="6.6" height="5" rx="1" fill="#e8892a"/><path d="M952.8 149L956 152.5L952.8 156L949.6 152.5Z" fill="#e8892a"/><path d="M958.5 158.5L963.7 161.3L958.5 164Z" fill="#e8892a"/></svg></body></html>
